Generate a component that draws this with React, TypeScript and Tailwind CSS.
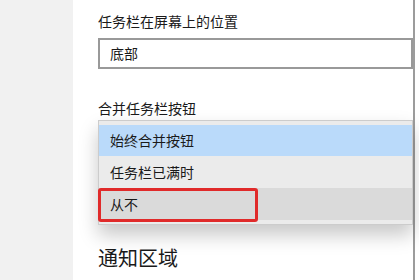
export default function App() {
  const font = { fontFamily: '"Noto Sans CJK SC", "Noto Sans", sans-serif' };

  return (
    <div
      className="flex h-[280px] w-[419px] overflow-hidden bg-white text-[#1a1a1a]"
      style={font}
    >
      {/* left nav pane */}
      <div className="w-[73px] shrink-0 bg-[#f1f1f1]" />

      {/* settings content */}
      <div className="flex flex-1 flex-col bg-white pl-[25px] pt-[11px]">
        <div className="h-[20px] text-[14px] leading-[20px]">任务栏在屏幕上的位置</div>

        <div className="mt-[7px] flex h-[31px] items-center border-2 border-[#999999] pl-[10px] text-[14px]">
          底部
        </div>

        <div className="relative mt-[29px]">
          <div className="h-[20px] text-[14px] leading-[20px]">合并任务栏按钮</div>
          <div className="mt-[2px] h-[32px] border-2 border-[#999999]" />

          {/* open dropdown */}
          <div className="absolute left-0 right-0 top-[22px] z-10 border border-[#cccccc] bg-[#ebebeb] py-[4px] text-[14px] shadow-[0_10px_18px_rgba(0,0,0,0.22)]">
            <div className="flex h-[31px] items-center bg-[#badafa] pl-[11px]">始终合并按钮</div>
            <div className="flex h-[32px] items-center pl-[11px]">任务栏已满时</div>
            <div className="relative flex h-[32px] items-center bg-[#dadada] pl-[11px]">
              从不
              <div className="absolute left-[-1px] top-0 h-[34px] w-[160px] rounded-[3px] border-[3px] border-[#e02a2a]" />
            </div>
          </div>
        </div>

        <div className="mt-[92px] text-[20px] leading-[28px]">通知区域</div>
      </div>

      {/* window edge */}
      <div className="w-[2px] shrink-0 bg-[#9c9c9c]" />
      <div className="w-[4px] shrink-0 bg-white" />
    </div>
  );
}
